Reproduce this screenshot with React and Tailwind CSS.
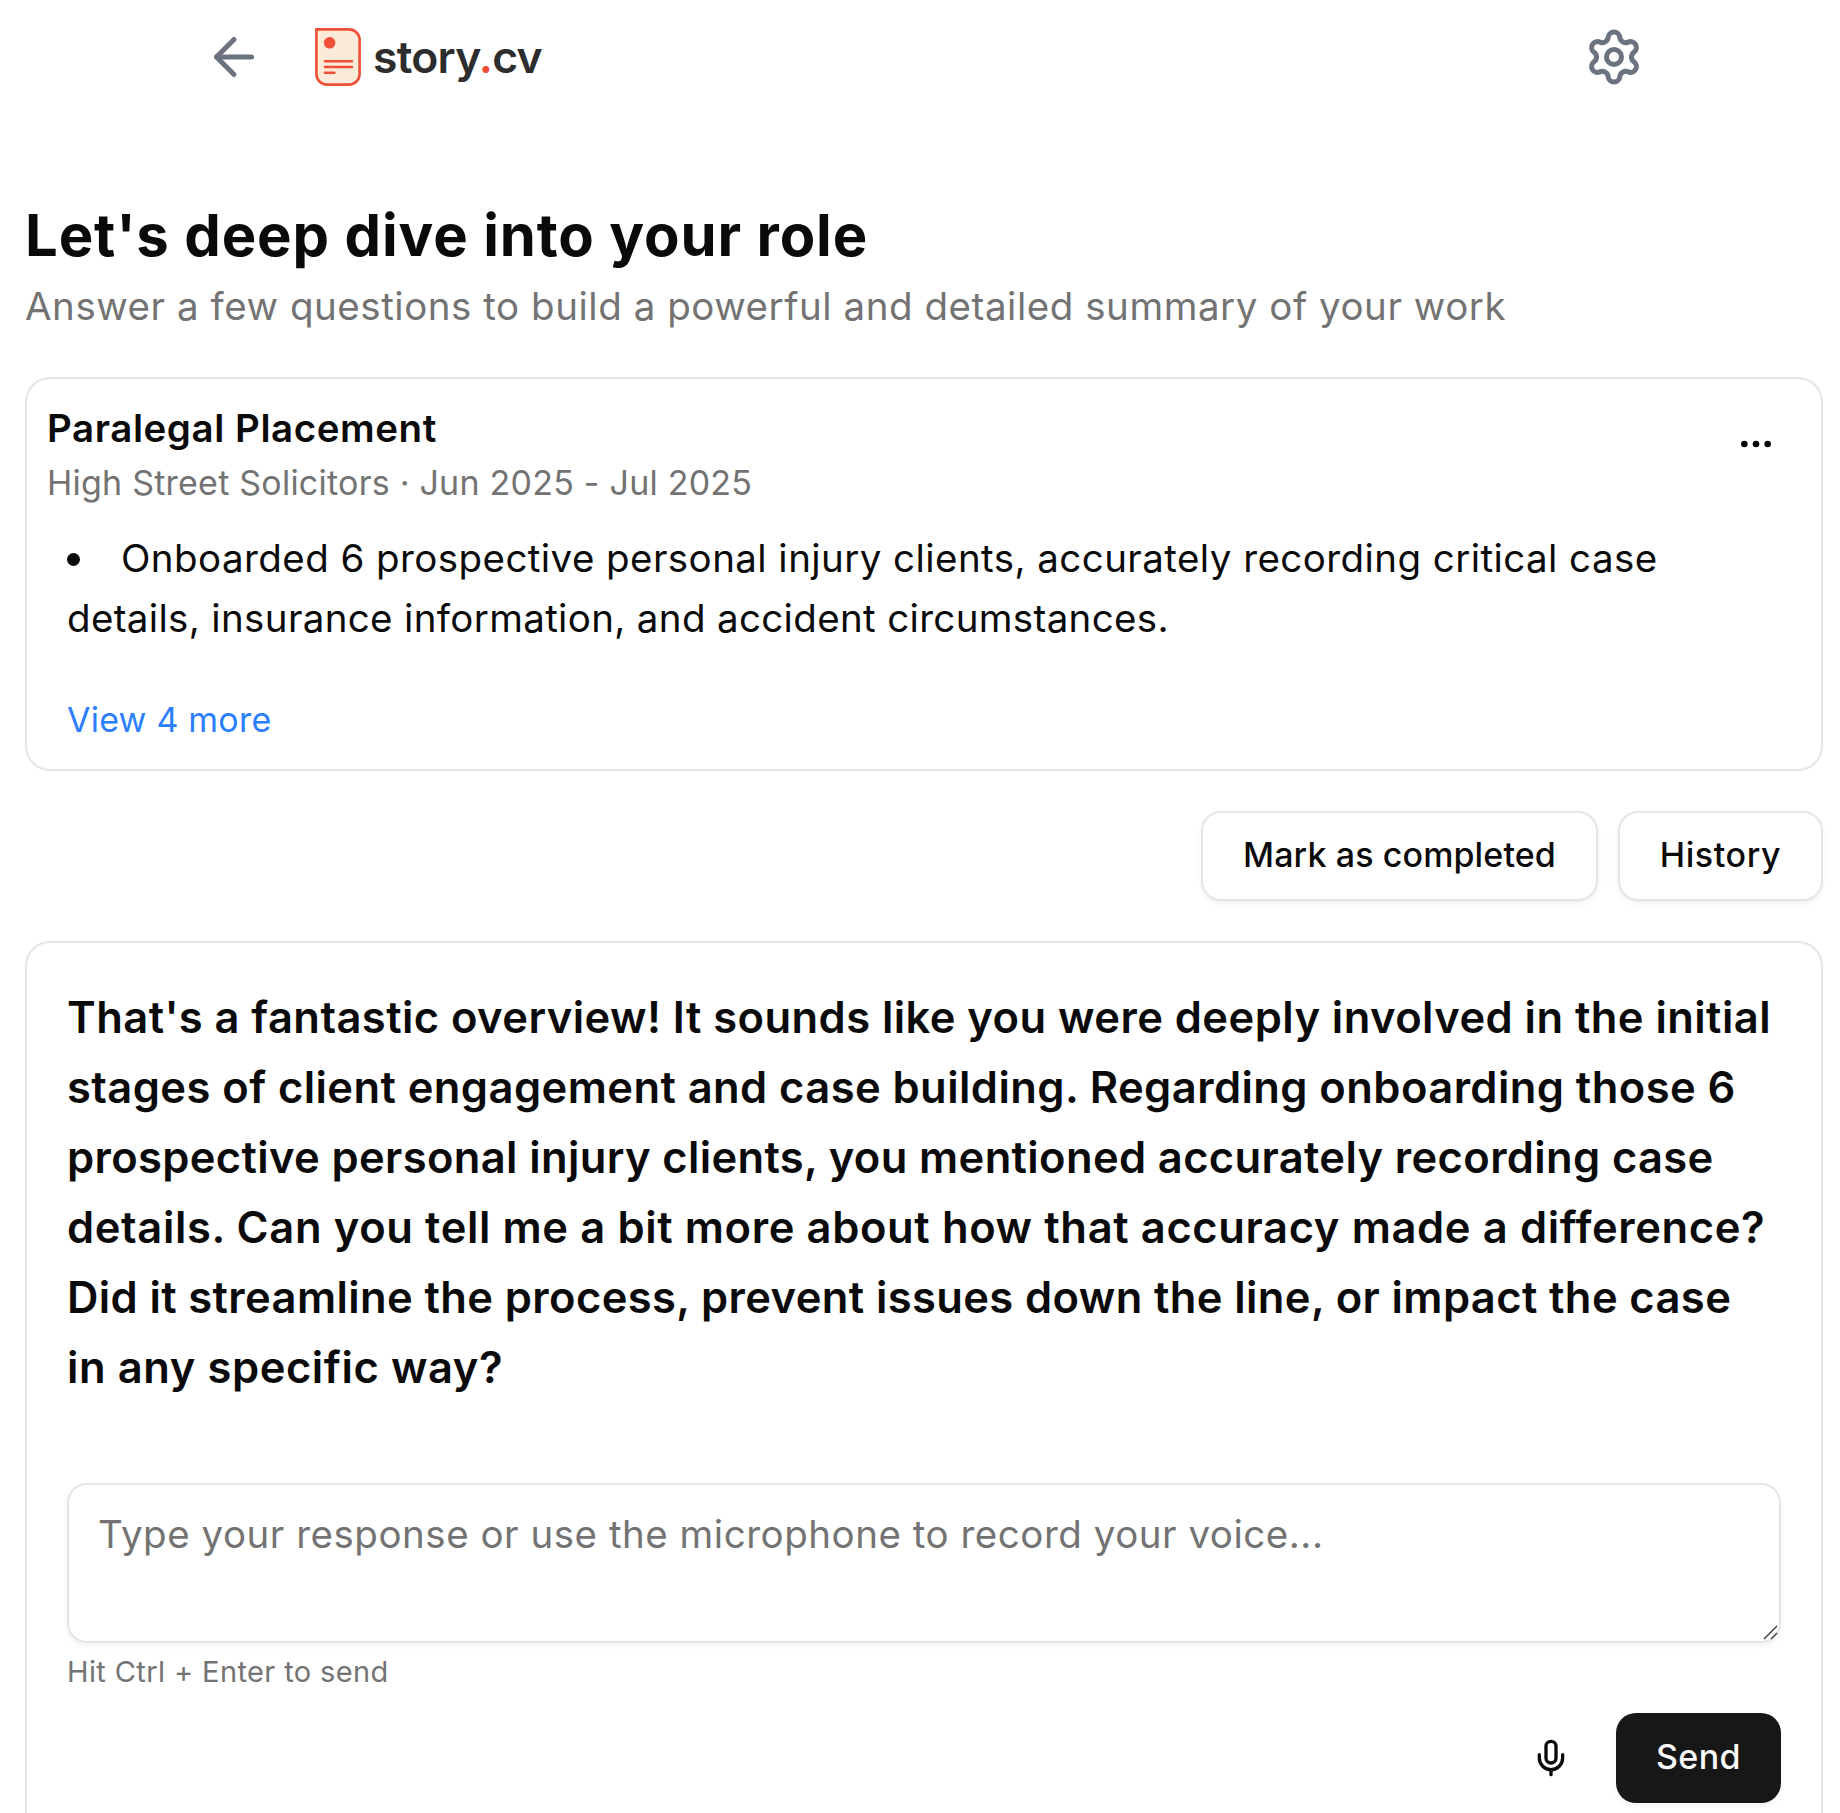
import React, { useState } from "react";
import { ArrowLeft, Ellipsis, Mic, Settings } from "lucide-react";

// Data--------------------------------------------------------------------------------------------------------------------------------
const QUESTION = [
  {
    text: "That's a fantastic overview! It sounds like you were deeply involved in the initial",
    style: "tracking-[0.44px]",
  },
  {
    text: "stages of client engagement and case building. Regarding onboarding those 6",
    style: "tracking-[0.43px]",
  },
  {
    text: "prospective personal injury clients, you mentioned accurately recording case",
    style: "tracking-[0.359px]",
  },
  {
    text: "details. Can you tell me a bit more about how that accuracy made a difference?",
    style: "tracking-[0.623px]",
  },
  {
    text: "Did it streamline the process, prevent issues down the line, or impact the case",
    style: "tracking-[0.388px]",
  },
  { text: "in any specific way?", style: "tracking-[0.58px]" },
];

function LogoMark() {
  return (
    <svg className="h-[58px] w-[46px]" viewBox="0 0 46 58" fill="none">
      <path
        d="M1.4 1.4H34A10.6 10.6 0 0 1 44.6 12V46A10.6 10.6 0 0 1 34 56.6H12A10.6 10.6 0 0 1 1.4 46Z"
        fill="#fdebd9"
        stroke="#f14f35"
        strokeWidth="2.6"
      />
      <circle cx="14.6" cy="14.8" r="5.8" fill="#f14f35" />
      <path
        d="M10 33.2H37M10 39H37M10 44.8H19.4"
        stroke="#f14f35"
        strokeWidth="2.6"
        strokeLinecap="round"
      />
    </svg>
  );
}

function Header() {
  return (
    <header className="flex h-[114px] items-center pl-[204px] pr-[196px]">
      <button type="button">
        <ArrowLeft size={60} strokeWidth={2} color="#6b7280" />
      </button>
      <div className="ml-[51px] flex items-center">
        <LogoMark />
        <span className="ml-3 text-[44.5px] leading-[60px] font-semibold tracking-[-0.75px] text-[#2d2d2d]">
          story<span className="text-[#f14f35]">.</span>cv
        </span>
      </div>
      <button type="button" className="ml-auto">
        <Settings size={60} strokeWidth={2} color="#6b7280" />
      </button>
    </header>
  );
}

function RoleCard() {
  return (
    <div className="mt-[41px] h-[394px] rounded-[25px] border-2 border-[#e5e5e5] pt-6">
      <div className="flex justify-between pl-5 pr-[45px]">
        <div>
          <h2 className="text-[38.5px] leading-[50px] font-semibold tracking-[0.56px]">
            Paralegal Placement
          </h2>
          <p className="mt-[5px] text-[34px] leading-[50px] tracking-[0.23px] text-[#737373]">
            High Street Solicitors · Jun 2025 - Jul 2025
          </p>
        </div>
        <button type="button" className="mt-[21px] h-10">
          <Ellipsis size={40} />
        </button>
      </div>
      <div className="mt-5 pl-10 text-[38.5px] leading-[60px] whitespace-nowrap">
        <div className="flex items-center tracking-[0.43px]">
          <span className="mt-0.5 mr-[41px] size-[13px] rounded-full bg-[#0a0a0a]" />
          Onboarded 6 prospective personal injury clients, accurately recording
          critical case
        </div>
        <div className="tracking-[0.34px]">
          details, insurance information, and accident circumstances.
        </div>
      </div>
      <button
        type="button"
        className="mt-[47px] ml-10 block text-[34px] leading-[50px] tracking-[0.22px] text-[#2b7fff]"
      >
        View 4 more
      </button>
    </div>
  );
}

function ChatCard() {
  const [answer, setAnswer] = useState("");

  return (
    <div className="mt-10 h-[1000px] rounded-[25px] border-2 border-[#e5e5e5] px-10 pt-[39px]">
      <div className="text-[43.5px] leading-[70px] font-semibold whitespace-nowrap">
        {QUESTION.map((line) => (
          <div key={line.text} className={line.style}>
            {line.text}
          </div>
        ))}
      </div>

      <div className="relative mt-[81px] h-40">
        <textarea
          className="block h-40 w-full resize-none rounded-[20px] border-2 border-[#e5e5e5] pt-[19px] pl-[29px] text-[38.5px] leading-[60px] tracking-[0.52px] shadow-[0_2.5px_5px_rgba(0,0,0,0.05)] outline-none placeholder:text-[#737373]"
          placeholder="Type your response or use the microphone to record your voice..."
          value={answer}
          onChange={(e) => setAnswer(e.target.value)}
        />
        {/* resize grip */}
        <svg
          className="absolute right-[3px] bottom-[3px] size-[15px]"
          viewBox="0 0 15 15"
          fill="none"
        >
          <path d="M1 14L14 1M8 14L14 8" stroke="#444" strokeWidth="1.5" />
        </svg>
      </div>
      <p className="mt-[9px] text-[29px] leading-10 tracking-[0.39px] text-[#737373]">
        Hit Ctrl + Enter to send
      </p>

      <div className="mt-[21px] flex items-center justify-end gap-5">
        <button
          type="button"
          className="flex size-[90px] items-center justify-center"
        >
          <Mic size={40} />
        </button>
        <button
          type="button"
          className="h-[90px] w-[165px] rounded-[20px] bg-[#171717] pb-[3px] text-[34px] font-medium tracking-[0.4px] text-[#fafafa] shadow-[0_2.5px_5px_rgba(0,0,0,0.05)]"
        >
          Send
        </button>
      </div>
    </div>
  );
}

function App() {
  return (
    <div className="h-[1813px] overflow-hidden bg-white font-['Inter','Liberation_Sans',sans-serif] text-[#0a0a0a]">
      <Header />
      <main className="ml-[25px] w-[1798px] pt-[81px]">
        <h1 className="text-[58px] leading-20 font-bold tracking-[0.87px]">
          Let's deep dive into your role
        </h1>
        <p className="mt-px text-[38.5px] leading-[60px] tracking-[0.54px] text-[#737373]">
          Answer a few questions to build a powerful and detailed summary of
          your work
        </p>

        <RoleCard />

        <div className="mt-10 flex justify-end gap-5 text-[34px] font-medium">
          <button
            type="button"
            className="h-[90px] w-[397px] rounded-[20px] border-2 border-[#e5e5e5] pb-[3px] tracking-[0.12px] shadow-[0_2.5px_5px_rgba(0,0,0,0.05)]"
          >
            Mark as completed
          </button>
          <button
            type="button"
            className="h-[90px] w-[205px] rounded-[20px] border-2 border-[#e5e5e5] pb-[3px] tracking-[0.6px] shadow-[0_2.5px_5px_rgba(0,0,0,0.05)]"
          >
            History
          </button>
        </div>

        <ChatCard />
      </main>
    </div>
  );
}

export default App;
